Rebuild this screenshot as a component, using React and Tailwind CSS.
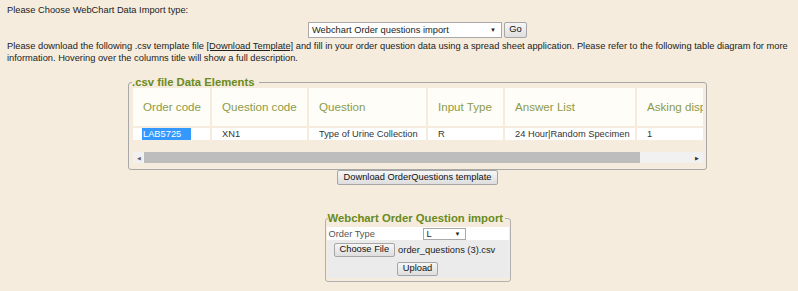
import React from 'react';

const btn =
  "border border-[#a6a6a6] rounded-[2px] bg-gradient-to-b from-[#f6f6f6] to-[#dedede] text-[#111] leading-none";

const columns = [
  { title: "Order code", value: "LAB5725", w: "w-[77px]", selected: true },
  { title: "Question code", value: "XN1", w: "w-[95px]" },
  { title: "Question", value: "Type of Urine Collection", w: "w-[117px]" },
  { title: "Input Type", value: "R", w: "w-[75px]" },
  { title: "Answer List", value: "24 Hour|Random Specimen", w: "w-[130px]" },
  { title: "Asking display order", value: "1", w: "w-[130px]" },
];

export default function App() {
  return (
    <div className="w-[798px] h-[291px] overflow-hidden bg-[#f5ecdd] text-[#222] text-[9.3px] leading-[12px] font-['Liberation_Sans',Arial,sans-serif]">
      <div className="pl-[7px] pt-[4px]">Please Choose WebChart Data Import type:</div>

      <div className="w-[835px] flex justify-center gap-[2px] mt-[6px]">
        <div className="w-[194px] h-[16px] bg-white border border-[#a9a9a9] flex items-center justify-between pl-[3px] pr-[5px]">
          <span>Webchart Order questions import</span>
          <span className="text-[6px]">▼</span>
        </div>
        <button className={`${btn} w-[23px] h-[16px]`}>Go</button>
      </div>

      <p className="pl-[7px] pr-[2px] mt-[3px] leading-[11.5px]">
        Please download the following .csv template file{" "}
        <span className="underline">[Download Template]</span> and fill in your order question data using a spread sheet
        application. Please refer to the following table diagram for more information. Hovering over the columns title
        will show a full description.
      </p>

      <div className="w-[835px] flex flex-col items-center">
        {/* csv data elements */}
        <fieldset className="w-[577px] mt-[13px] border border-[#a8a8a8] rounded-[3px] px-[3px] pb-[6px]">
          <legend className="pr-[5px] text-[11.3px] leading-[11px] font-bold text-[#6a8a22]">.csv file Data Elements</legend>
          <div className="ml-[1px] w-[570px] overflow-hidden">
            <div className="flex gap-[2px] w-max">
              {columns.map((c) => (
                <div
                  key={c.title}
                  className={`${c.w} shrink-0 h-[38px] bg-[#fffdf8] pl-[10px] flex items-center text-[11.6px] text-[#8c9b48] whitespace-nowrap overflow-hidden`}
                >
                  {c.title}
                </div>
              ))}
            </div>
            <div className="flex gap-[2px] w-max mt-[2px]">
              {columns.map((c) => (
                <div
                  key={c.title}
                  className={`${c.w} shrink-0 h-[12px] bg-white pl-[9px] flex items-center text-[#333] whitespace-nowrap`}
                >
                  {c.selected ? (
                    <span className="bg-[#3399ff] text-white pl-[1px] pr-[10px]">{c.value}</span>
                  ) : (
                    <span className="pl-[1px]">{c.value}</span>
                  )}
                </div>
              ))}
            </div>
          </div>
          {/* horizontal scrollbar */}
          <div className="ml-[1px] w-[570px] h-[11px] mt-[12px] bg-[#f1f1f1] flex items-center">
            <div className="w-[11px] flex justify-center text-[5px] text-[#666]">◀</div>
            <div className="w-[496px] h-[11px] bg-[#bdbdbd]" />
            <div className="flex-1 flex justify-end pr-[4px] text-[5px] text-[#333]">▶</div>
          </div>
        </fieldset>

        <button className={`${btn} h-[15px] px-[6px]`}>Download OrderQuestions template</button>

        {/* upload form */}
        <fieldset className="w-[186px] mt-[28px] border border-[#b0b0b0] rounded-[3px] px-[1px] pb-[3px]">
          <legend className="ml-[1px] pr-[2px] text-[11.3px] leading-[11px] font-bold text-[#6a8a22]">
            Webchart Order Question import
          </legend>
          <div className="mt-[3px] h-[13px] bg-white flex items-center">
            <div className="w-[96px] shrink-0 pl-[2px] text-[#555]">Order Type</div>
            <div className="w-[43px] shrink-0 h-[12px] bg-white border border-[#a9a9a9] flex items-center justify-between pl-[3px] pr-[4px]">
              <span>L</span>
              <span className="text-[6px]">▼</span>
            </div>
          </div>
          <div className="h-[20px] bg-[#ebebeb] flex items-center pl-[7px]">
            <button className={`${btn} h-[14px] px-[5px]`}>Choose File</button>
            <span className="ml-[3px]">order_questions (3).csv</span>
          </div>
          <div className="h-[18px] bg-[#ebebeb] flex items-center justify-center">
            <button className={`${btn} h-[14px] px-[5px]`}>Upload</button>
          </div>
        </fieldset>
      </div>
    </div>
  );
}
